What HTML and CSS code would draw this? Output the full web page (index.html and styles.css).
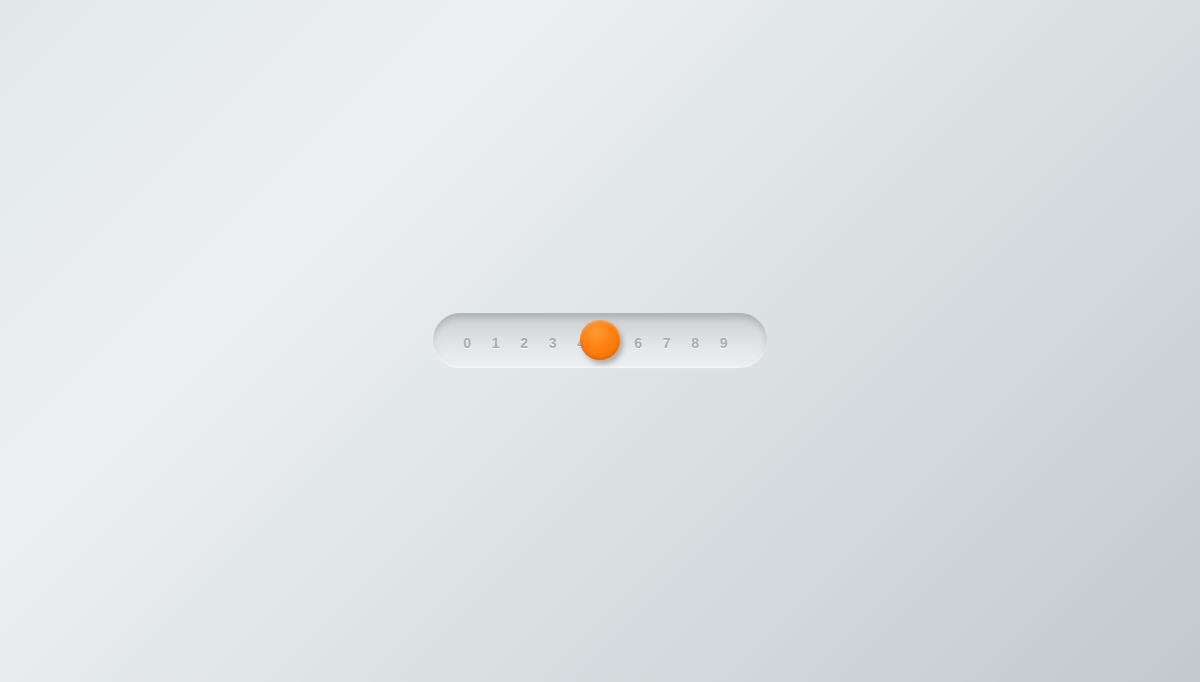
FILE: index.html
```html
<!DOCTYPE html>
<html>
<head>
<meta charset="utf-8">
<link rel="stylesheet" href="styles.css">
</head>
<body>
<div class="stage">
  <div class="slider">
    <ol class="ticks">
      <li>0</li><li>1</li><li>2</li><li>3</li><li>4</li>
      <li>5</li><li>6</li><li>7</li><li>8</li><li>9</li>
    </ol>
    <span class="knob"></span>
  </div>
</div>
</body>
</html>
```
FILE: styles.css
```css
html, body {
  margin: 0;
  height: 100%;
}

body {
  background: linear-gradient(135deg, #e3e8eb 0%, #ecf0f3 28%, #dde2e5 55%, #c2c9cc 100%);
  font-family: "Liberation Sans", Arial, sans-serif;
}

.stage {
  height: 100%;
  box-sizing: border-box;
  padding-bottom: 2px;
  display: flex;
  align-items: center;
  justify-content: center;
}

.slider {
  position: relative;
  width: 334px;
  height: 54px;
  border-radius: 27px;
  background: linear-gradient(180deg, #c6cacd 0%, #d9dcdf 35%, #e6e8ea 70%, #eceef0 100%);
  box-shadow: inset 0 4px 6px rgba(120, 128, 134, 0.35),
              inset 0 -1px 2px rgba(255, 255, 255, 0.6),
              0 1px 1px rgba(255, 255, 255, 0.7);
  display: flex;
  align-items: center;
  justify-content: center;
}

.ticks {
  list-style: none;
  margin: 6px 9px 0 0;
  padding: 0;
  display: flex;
}

.ticks li {
  width: 28.5px;
  text-align: center;
  font-size: 14px;
  font-weight: bold;
  color: #a9adb0;
  text-shadow: 0 1px 0 rgba(255, 255, 255, 0.9);
}

.knob {
  position: absolute;
  left: 147px;
  top: 7px;
  width: 40px;
  height: 40px;
  border-radius: 50%;
  background: radial-gradient(circle at 40% 30%, #ff9a3a 0%, #ff7f0f 45%, #f26e00 100%);
  box-shadow: inset 0 -2px 3px rgba(190, 80, 0, 0.45),
              inset 0 2px 2px rgba(255, 190, 130, 0.5),
              3px 4px 5px rgba(60, 60, 60, 0.35);
}
```
